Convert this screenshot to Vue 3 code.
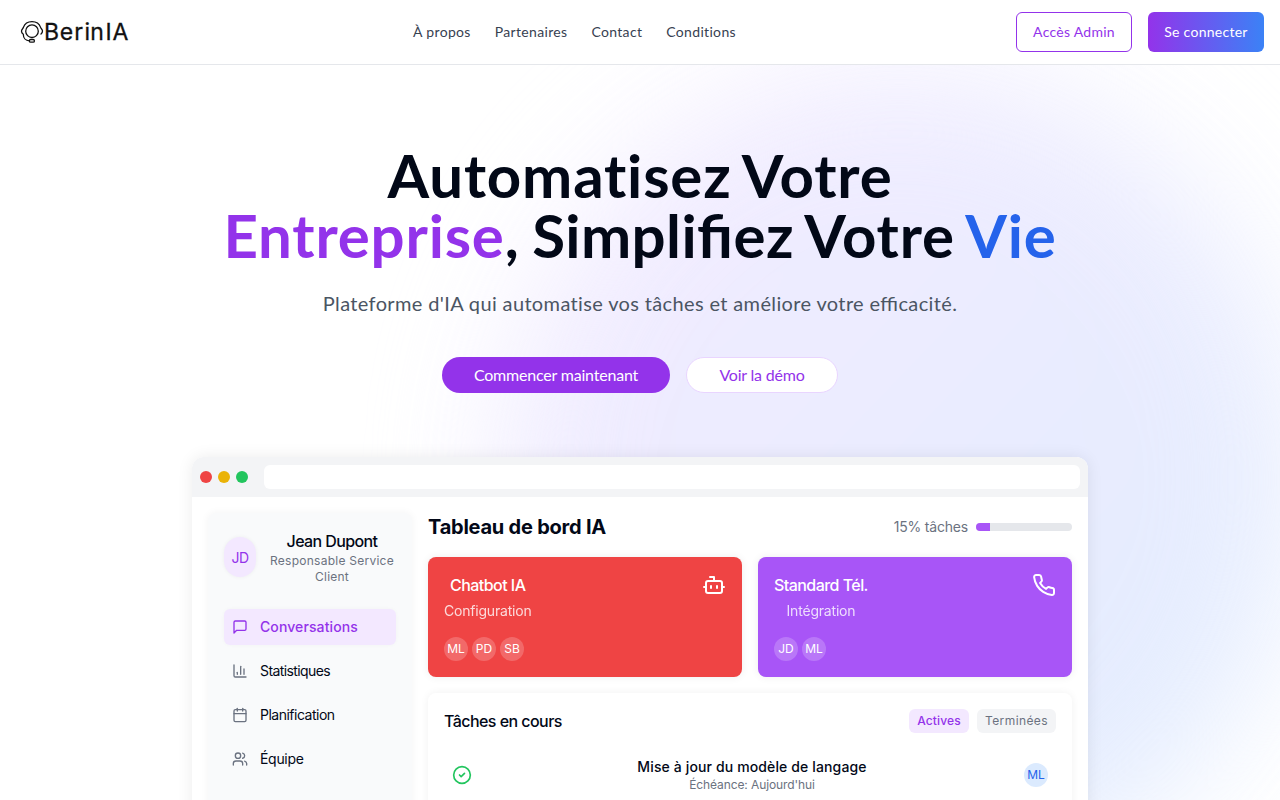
<script setup>
const links = ['À propos', 'Partenaires', 'Contact', 'Conditions']
const menu = [
  { label: 'Conversations', key: 'conv', icon: ['M21 15a2 2 0 0 1-2 2H7l-4 4V5a2 2 0 0 1 2-2h14a2 2 0 0 1 2 2z'], active: true },
  { label: 'Statistiques', key: 'stat', icon: ['M3 3v16a2 2 0 0 0 2 2h16', 'M18 17V9', 'M13 17V5', 'M8 17v-3'] },
  { label: 'Planification', key: 'plan', icon: ['M8 2v4', 'M16 2v4', 'M5 4h14a2 2 0 0 1 2 2v14a2 2 0 0 1-2 2H5a2 2 0 0 1-2-2V6a2 2 0 0 1 2-2z', 'M3 10h18'] },
  { label: 'Équipe', key: 'team', icon: ['M16 21v-2a4 4 0 0 0-4-4H6a4 4 0 0 0-4 4v2', 'M5 7a4 4 0 1 0 8 0a4 4 0 1 0-8 0', 'M22 21v-2a4 4 0 0 0-3-3.87', 'M16 3.13a4 4 0 0 1 0 7.75'] }
]
const cards = [
  { title: 'Chatbot IA', sub: 'Configuration', tone: 'red', people: ['ML', 'PD', 'SB'], icon: ['M12 8V4H8', 'M6 8h12a2 2 0 0 1 2 2v8a2 2 0 0 1-2 2H6a2 2 0 0 1-2-2v-8a2 2 0 0 1 2-2z', 'M2 14h2', 'M20 14h2', 'M15 13v2', 'M9 13v2'] },
  { title: 'Standard Tél.', sub: 'Intégration', tone: 'purple', people: ['JD', 'ML'], icon: ['M22 16.92v3a2 2 0 0 1-2.18 2 19.79 19.79 0 0 1-8.63-3.07 19.5 19.5 0 0 1-6-6 19.79 19.79 0 0 1-3.07-8.67A2 2 0 0 1 4.11 2h3a2 2 0 0 1 2 1.72 12.84 12.84 0 0 0 .7 2.81 2 2 0 0 1-.45 2.11L8.09 9.91a16 16 0 0 0 6 6l1.27-1.27a2 2 0 0 1 2.11-.45 12.84 12.84 0 0 0 2.81.7A2 2 0 0 1 22 16.92z'] }
]
const progress = 15
</script>

<template>
  <div class="page">
    <div class="glow"></div>
    <header class="bar">
      <svg class="logo" viewBox="0 0 117 28" width="117" height="28">
        <g fill="none" stroke="#111" stroke-width="1.3" stroke-linecap="round" stroke-linejoin="round">
          <circle cx="16" cy="13.2" r="6.3" />
          <path d="M7.4 9.400C8.600 5.900 11.900 3.600 16 3.600s7.400 2.300 8.600 5.800c.3 1.300 1.900 1.700 1.900 3.700c0 1.400-.6 2.200-1.500 2.900" />
          <path d="M7.400 9.400c-.3 1.300-1.900 1.700-1.900 3.800c0 1.500.8 2.300 1.800 3c0 3.800 2.300 6.600 6.100 6.700" />
          <rect x="13.400" y="21.500" width="5" height="2.700" rx="1.300" />
        </g>
        <text y="21.700" x="28.100 43.800 58.300 68.400 74.300 89.600 96.400">BerinIA</text>
      </svg>
      <nav class="links"><a v-for="l in links" :key="l">{{ l }}</a></nav>
      <div class="auth">
        <button class="admin">Accès Admin</button>
        <button class="login">Se connecter</button>
      </div>
    </header>

    <main class="hero">
      <h1><span class="line">Automatisez Votre</span><span class="line"><span class="violet">Entreprise</span>, <span class="lig">Simplifiez</span> Votre <span class="blue">Vie</span></span></h1>
      <p class="lead">Plateforme d'IA qui automatise vos tâches et améliore votre <span class="lig">efficacité.</span></p>
      <div class="cta">
        <button class="start">Commencer maintenant</button>
        <button class="demo">Voir la démo</button>
      </div>

      <section class="window">
        <div class="chrome">
          <i class="dot r"></i><i class="dot y"></i><i class="dot g"></i>
          <div class="address"></div>
        </div>
        <div class="content">
          <aside class="side">
            <div class="profile">
              <div class="avatar">JD</div>
              <div class="who"><div class="name">Jean Dupont</div><div class="role">Responsable Service Client</div></div>
            </div>
            <div class="menu">
              <div v-for="m in menu" :key="m.key" class="item" :class="[m.key, { active: m.active }]">
                <svg class="ico" width="16" height="16" viewBox="0 0 24 24"><path v-for="d in m.icon" :key="d" :d="d" /></svg>
                <span>{{ m.label }}</span>
              </div>
            </div>
          </aside>
          <div class="board">
            <div class="top">
              <h2>Tableau de bord IA</h2>
              <div class="prog"><span>{{ progress }}% tâches</span><div class="track"><div class="fill" :style="{ width: progress + '%' }"></div></div></div>
            </div>
            <div class="cards">
              <div v-for="c in cards" :key="c.title" class="card" :class="c.tone">
                <div class="head">
                  <div class="txt"><div class="ct">{{ c.title }}</div><div class="cs">{{ c.sub }}</div></div>
                  <svg class="ico" width="24" height="24" viewBox="0 0 24 24"><path v-for="d in c.icon" :key="d" :d="d" /></svg>
                </div>
                <div class="people"><span v-for="p in c.people" :key="p">{{ p }}</span></div>
              </div>
            </div>
            <div class="tasks">
              <div class="thead">
                <div class="tt">Tâches en cours</div>
                <div class="tags"><span class="tag on">Actives</span><span class="tag">Terminées</span></div>
              </div>
              <div class="row">
                <svg class="ico ok" width="20" height="20" viewBox="0 0 24 24"><circle cx="12" cy="12" r="10" /><path d="m9 12 2 2 4-4" /></svg>
                <div class="desc"><div class="dt">Mise à jour du modèle de langage</div><div class="dd">Échéance: Aujourd'hui</div></div>
                <span class="ml">ML</span>
              </div>
            </div>
          </div>
        </div>
      </section>
    </main>
  </div>
</template>

<style>
html, body { overflow: hidden; }
</style>

<style scoped>
* { box-sizing: border-box; }
.page { position: relative; height: 800px; overflow: hidden; background: #fff; color: #020817; font-family: Lato, sans-serif; }
.glow { position: absolute; left: 500px; top: 65px; width: 800px; height: 830px; border-radius: 50%; background: linear-gradient(to bottom right, #f3e8ff, #dbeafe); filter: blur(64px); opacity: .85; }
.bar { position: relative; display: flex; justify-content: space-between; align-items: center; height: 65px; padding: 0 16px; background: #fff; border-bottom: 1px solid #e5e7eb; }
.logo { display: block; }
.logo text { font-family: Inter, sans-serif; font-size: 23px; fill: #111; stroke: #111; stroke-width: .3px; }
.links { display: flex; gap: 24px; font-size: 14px; line-height: 20px; letter-spacing: .33px; color: #374151; }
.auth { display: flex; justify-content: flex-end; gap: 16px; }
button { font-family: inherit; border: 0; margin: 0; }
.auth button { width: 116px; height: 40px; padding: 0 0 2px; font-size: 14px; letter-spacing: .27px; border-radius: 6px; white-space: nowrap; }
.auth .admin { border: 1px solid #9333ea; color: #9333ea; background: #fff; }
.auth .login { background: linear-gradient(to right, #9333ea, #3b82f6); color: #fff; }
.hero { position: relative; display: flex; flex-direction: column; align-items: center; padding-top: 80px; text-align: center; }
h1 { margin: 0; font-size: 60px; line-height: 60px; font-weight: 700; white-space: nowrap; letter-spacing: .8px; word-spacing: -2.8px; }
.line { display: block; }
.lig { font-feature-settings: "liga" 1; }
h1 .lig { letter-spacing: .4px; }
.violet { color: #9333ea; }
.blue { color: #2563eb; }
.lead { margin: 24px 0 0; font-size: 20px; line-height: 28px; letter-spacing: .36px; color: #4b5563; }
.cta { display: flex; gap: 16px; margin-top: 40px; }
.cta button { height: 36px; padding: 0 0 2px; border-radius: 18px; font-size: 16px; letter-spacing: -.2px; white-space: nowrap; }
.cta .start { width: 228px; background: #9333ea; color: #fff; }
.cta .demo { width: 152px; background: #fff; color: #9333ea; border: 1px solid #e9d5ff; }
.window { width: 896px; margin-top: 64px; height: 600px; background: #fff; border-radius: 12px 12px 0 0; overflow: hidden; box-shadow: 0 0 16px rgba(0,0,0,.08); font-family: Inter, sans-serif; }
.chrome { display: flex; align-items: center; gap: 6px; height: 40px; padding: 8px; background: #f3f4f6; }
.dot { width: 12px; height: 12px; border-radius: 50%; }
.r { background: #ef4444; }
.y { background: #eab308; }
.g { background: #22c55e; }
.address { flex: 1; height: 24px; margin-left: 10px; background: #fff; border-radius: 6px; }
.content { display: grid; grid-template-columns: 204px 1fr; gap: 16px; padding: 16px; height: 560px; }
.side { background: #f9fafb; border-radius: 8px; padding: 16px; box-shadow: 0 0 8px rgba(0,0,0,.05); }
.profile { display: flex; align-items: center; gap: 12px; margin-bottom: 24px; }
.avatar { display: flex; align-items: center; justify-content: center; flex: none; width: 32px; height: 40px; border-radius: 20px; background: #f3e8ff; color: #9333ea; font-size: 14px; letter-spacing: -.5px; box-shadow: 0 0 4px rgba(0,0,0,.05); }
.who { flex: 1; white-space: normal; }
.name { font-size: 16px; line-height: 24px; font-weight: 500; letter-spacing: -.6px; }
.role { font-size: 12px; line-height: 16px; color: #6b7280; letter-spacing: .25px; }
.menu { display: flex; flex-direction: column; gap: 8px; }
.item { display: flex; align-items: center; gap: 12px; height: 36px; padding: 0 8px; border-radius: 6px; font-size: 14px; }
.item span { line-height: 20px; margin-top: -1px; }
.item .ico { color: #6b7280; }
.conv { letter-spacing: .1px; }
.stat { letter-spacing: -.6px; }
.plan { letter-spacing: -.5px; }
.team { letter-spacing: -.3px; }
.item.active { background: #f3e8ff; color: #9333ea; font-weight: 500; box-shadow: 0 0 4px rgba(0,0,0,.03); }
.item.active .ico { color: #9333ea; }
.ico { flex: none; fill: none; stroke: currentColor; stroke-width: 2; stroke-linecap: round; stroke-linejoin: round; }
.top { display: flex; justify-content: space-between; align-items: center; margin-bottom: 16px; }
h2 { margin: 0; font-size: 20px; line-height: 28px; font-weight: 700; letter-spacing: -.23px; }
.prog { display: flex; align-items: center; gap: 8px; font-size: 14px; line-height: 20px; color: #6b7280; letter-spacing: -.2px; }
.track { width: 96px; height: 8px; border-radius: 4px; background: #e5e7eb; overflow: hidden; }
.fill { height: 100%; background: #a855f7; }
.cards { display: grid; grid-template-columns: 1fr 1fr; gap: 16px; }
.card { height: 120px; padding: 16px; border-radius: 8px; color: #fff; box-shadow: 0 0 8px rgba(0,0,0,.07); }
.red { background: #ef4444; }
.purple { background: #a855f7; }
.head { display: flex; justify-content: space-between; align-items: flex-start; height: 48px; }
.ct { font-size: 16px; line-height: 24px; font-weight: 500; letter-spacing: -.55px; }
.cs { margin-top: 4px; font-size: 14px; line-height: 20px; opacity: .8; letter-spacing: -.2px; }
.people { display: flex; gap: 4px; margin-top: 16px; }
.people span, .ml { display: flex; align-items: center; justify-content: center; width: 24px; height: 24px; border-radius: 50%; font-size: 12px; padding-bottom: 1px; background: rgba(255,255,255,.2); }
.tasks { margin-top: 16px; padding: 16px; height: 250px; border-radius: 8px; background: #fff; box-shadow: 0 0 8px rgba(0,0,0,.06); }
.thead { display: flex; justify-content: space-between; align-items: center; }
.tt { font-size: 16px; line-height: 24px; font-weight: 500; letter-spacing: -.55px; }
.tags { display: flex; gap: 8px; }
.tag { width: 79px; height: 24px; border-radius: 6px; font-size: 12px; line-height: 24px; letter-spacing: .4px; background: #f3f4f6; color: #6b7280; }
.tag.on { width: 60px; background: #f3e8ff; color: #9333ea; font-weight: 500; letter-spacing: .15px; }
.row { display: flex; align-items: center; margin-top: 16px; padding: 8px; }
.desc { flex: 1; margin-left: 8px; }
.ok { color: #22c55e; }
.dt { font-size: 14px; line-height: 20px; font-weight: 500; letter-spacing: .13px; }
.dd { font-size: 12px; line-height: 16px; color: #6b7280; letter-spacing: -.1px; }
.ml { background: #dbeafe; color: #2563eb; }
</style>
